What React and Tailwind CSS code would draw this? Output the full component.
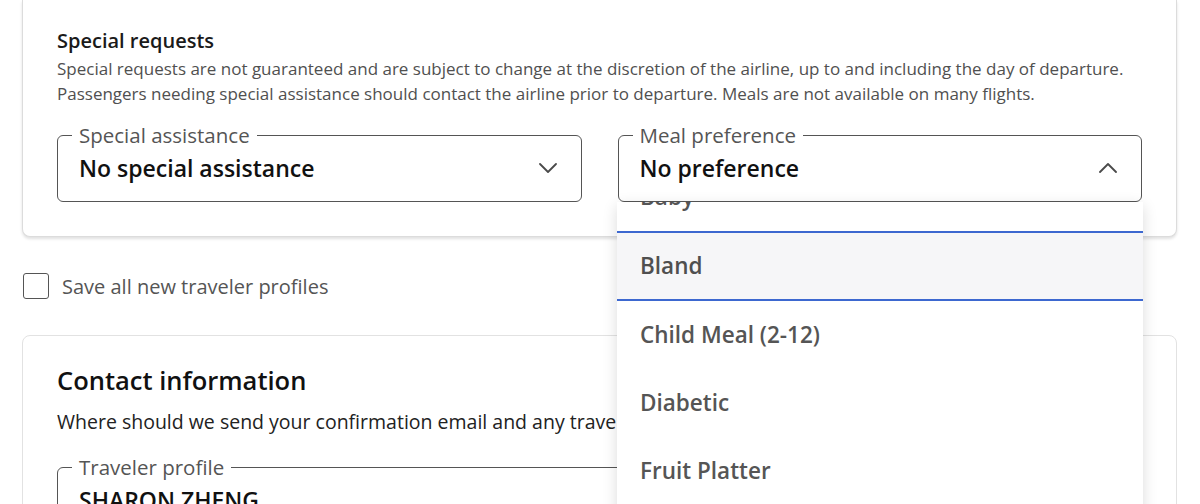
import React from 'react';

const Chevron = ({ up }) => (
    <svg width="18" height="10" viewBox="0 0 18 10" fill="none" className="shrink-0">
        <path
            d={up ? 'M1 9 L9 1 L17 9' : 'M1 1 L9 9 L17 1'}
            stroke="#4a4a4a"
            strokeWidth="1.8"
            strokeLinecap="round"
            strokeLinejoin="round"
        />
    </svg>
);

const SelectField = ({ label, value, up, className = '' }) => (
    <fieldset className={`border border-[#555] rounded-[6px] pl-[14px] pr-[24px] pt-0 pb-[18px] m-0 ${className}`}>
        <legend className="px-[7px] text-[20.5px] leading-[26px] text-[#555]">{label}</legend>
        <div className="flex items-center justify-between pl-[7px] pt-[5px]">
            <span className="text-[23px] leading-[30px] font-semibold text-[#111]">{value}</span>
            <Chevron up={up} />
        </div>
    </fieldset>
);

const meals = ['Baby', 'Bland', 'Child Meal (2-12)', 'Diabetic', 'Fruit Platter', 'Gluten Free'];

export default function App() {
    return (
        <div className="relative w-[1200px] h-[504px] overflow-hidden bg-white font-['Open_Sans',sans-serif]">
            <div className="ml-[22px] w-[1155px] bg-white border-x border-b border-[#dcdcdc] rounded-b-[8px] shadow-[0_2px_3px_rgba(0,0,0,0.12)] px-[34px] pt-[28px] pb-[34px]">
                <h2 className="text-[20px] leading-[26px] font-semibold text-[#1a1a1a]">Special requests</h2>
                <p className="mt-[2px] text-[17px] leading-[25px] text-[#505050] whitespace-nowrap">
                    Special requests are not guaranteed and are subject to change at the discretion of the airline, up to and including the day of departure.
                    <br />
                    Passengers needing special assistance should contact the airline prior to departure. Meals are not available on many flights.
                </p>
                <div className="mt-[16px] flex gap-[36px]">
                    <SelectField label="Special assistance" value="No special assistance" className="w-[525px]" />
                    <SelectField label="Meal preference" value="No preference" up className="w-[525px]" />
                </div>
            </div>

            <label className="mt-[34px] ml-[23px] flex items-center gap-[13px]">
                <span className="w-[26px] h-[26px] border-[1.5px] border-[#555] rounded-[3px] bg-white" />
                <span className="text-[20px] leading-[28px] text-[#555] pt-[2px]">Save all new traveler profiles</span>
            </label>

            <div className="mt-[34px] ml-[22px] w-[1155px] bg-white border border-[#e2e2e2] rounded-[8px] px-[34px] pt-[27px]">
                <h2 className="text-[25.5px] leading-[34px] font-semibold text-[#111]">Contact information</h2>
                <p className="mt-[11px] text-[19.5px] leading-[28px] text-[#222] whitespace-nowrap">
                    Where should we send your confirmation email and any travel updates?
                </p>
                <fieldset className="mt-[18px] w-[1086px] border border-[#555] rounded-[6px] pl-[14px] pt-0 pb-[16px] m-0">
                    <legend className="px-[7px] text-[20.5px] leading-[26px] text-[#555]">Traveler profile</legend>
                    <div className="pl-[7px] pt-[5px] text-[23px] leading-[30px] font-semibold text-[#111]">SHARON ZHENG</div>
                </fieldset>
            </div>

            <div className="absolute left-[617px] top-[202px] w-[526px] h-[320px] overflow-hidden bg-white shadow-[0_4px_14px_rgba(0,0,0,0.14)]">
                <ul className="-mt-[39px]">
                    {meals.map((m) => (
                        <li
                            key={m}
                            className={
                                m === 'Bland'
                                    ? 'h-[70px] flex items-center pl-[23px] bg-[#f6f6f8] border-y-2 border-[#3d68d0] text-[22.5px] font-semibold text-[#4f4f4f]'
                                    : 'h-[68px] flex items-center pl-[23px] pb-[1px] text-[22.5px] font-semibold text-[#555]'
                            }
                        >
                            {m}
                        </li>
                    ))}
                </ul>
            </div>
        </div>
    );
}
